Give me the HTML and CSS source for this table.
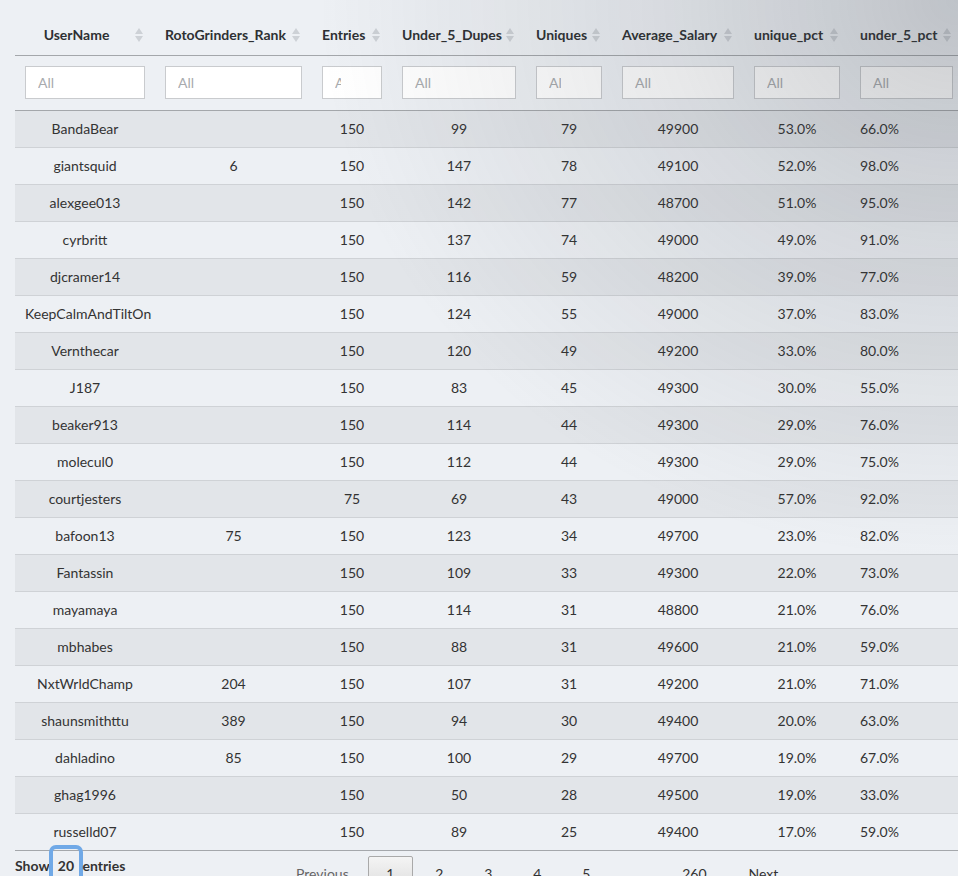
FILE: index.html
```html
<!DOCTYPE html>
<html lang="en">
<head>
<meta charset="utf-8">
<title>DFS Users</title>
<link rel="stylesheet" href="styles.css">
</head>
<body>
<div class="page">
  <table class="dt">
    <colgroup>
      <col class="c1"><col class="c2"><col class="c3"><col class="c4"><col class="c5"><col class="c6"><col class="c7"><col class="c8">
    </colgroup>
    <thead>
      <tr class="head">
        <th class="sortable">UserName</th>
        <th class="sortable">RotoGrinders_Rank</th>
        <th class="sortable">Entries</th>
        <th class="sortable">Under_5_Dupes</th>
        <th class="sortable">Uniques</th>
        <th class="sortable">Average_Salary</th>
        <th class="sortable">unique_pct</th>
        <th class="sortable left">under_5_pct</th>
      </tr>
      <tr class="filters">
        <td><input class="flt" placeholder="All"></td>
        <td><input class="flt" placeholder="All"></td>
        <td><input class="flt" placeholder="All"></td>
        <td><input class="flt" placeholder="All"></td>
        <td><input class="flt" placeholder="All"></td>
        <td><input class="flt" placeholder="All"></td>
        <td><input class="flt" placeholder="All"></td>
        <td><input class="flt" placeholder="All"></td>
      </tr>
    </thead>
    <tbody>
      <tr><td>BandaBear</td><td></td><td>150</td><td>99</td><td>79</td><td>49900</td><td>53.0%</td><td class="left">66.0%</td></tr>
      <tr><td>giantsquid</td><td>6</td><td>150</td><td>147</td><td>78</td><td>49100</td><td>52.0%</td><td class="left">98.0%</td></tr>
      <tr><td>alexgee013</td><td></td><td>150</td><td>142</td><td>77</td><td>48700</td><td>51.0%</td><td class="left">95.0%</td></tr>
      <tr><td>cyrbritt</td><td></td><td>150</td><td>137</td><td>74</td><td>49000</td><td>49.0%</td><td class="left">91.0%</td></tr>
      <tr><td>djcramer14</td><td></td><td>150</td><td>116</td><td>59</td><td>48200</td><td>39.0%</td><td class="left">77.0%</td></tr>
      <tr><td>KeepCalmAndTiltOn</td><td></td><td>150</td><td>124</td><td>55</td><td>49000</td><td>37.0%</td><td class="left">83.0%</td></tr>
      <tr><td>Vernthecar</td><td></td><td>150</td><td>120</td><td>49</td><td>49200</td><td>33.0%</td><td class="left">80.0%</td></tr>
      <tr><td>J187</td><td></td><td>150</td><td>83</td><td>45</td><td>49300</td><td>30.0%</td><td class="left">55.0%</td></tr>
      <tr><td>beaker913</td><td></td><td>150</td><td>114</td><td>44</td><td>49300</td><td>29.0%</td><td class="left">76.0%</td></tr>
      <tr><td>molecul0</td><td></td><td>150</td><td>112</td><td>44</td><td>49300</td><td>29.0%</td><td class="left">75.0%</td></tr>
      <tr><td>courtjesters</td><td></td><td>75</td><td>69</td><td>43</td><td>49000</td><td>57.0%</td><td class="left">92.0%</td></tr>
      <tr><td>bafoon13</td><td>75</td><td>150</td><td>123</td><td>34</td><td>49700</td><td>23.0%</td><td class="left">82.0%</td></tr>
      <tr><td>Fantassin</td><td></td><td>150</td><td>109</td><td>33</td><td>49300</td><td>22.0%</td><td class="left">73.0%</td></tr>
      <tr><td>mayamaya</td><td></td><td>150</td><td>114</td><td>31</td><td>48800</td><td>21.0%</td><td class="left">76.0%</td></tr>
      <tr><td>mbhabes</td><td></td><td>150</td><td>88</td><td>31</td><td>49600</td><td>21.0%</td><td class="left">59.0%</td></tr>
      <tr><td>NxtWrldChamp</td><td>204</td><td>150</td><td>107</td><td>31</td><td>49200</td><td>21.0%</td><td class="left">71.0%</td></tr>
      <tr><td>shaunsmithttu</td><td>389</td><td>150</td><td>94</td><td>30</td><td>49400</td><td>20.0%</td><td class="left">63.0%</td></tr>
      <tr><td>dahladino</td><td>85</td><td>150</td><td>100</td><td>29</td><td>49700</td><td>19.0%</td><td class="left">67.0%</td></tr>
      <tr><td>ghag1996</td><td></td><td>150</td><td>50</td><td>28</td><td>49500</td><td>19.0%</td><td class="left">33.0%</td></tr>
      <tr><td>russelld07</td><td></td><td>150</td><td>89</td><td>25</td><td>49400</td><td>17.0%</td><td class="left">59.0%</td></tr>
    </tbody>
  </table>
  <div class="footer">
    <div class="length">Show <span class="select">20</span> entries</div>
    <div class="paginate">
      <span class="pg disabled">Previous</span>
      <span class="pg current">1</span>
      <span class="pg">2</span>
      <span class="pg">3</span>
      <span class="pg">4</span>
      <span class="pg">5</span>
      <span class="ellipsis">…</span>
      <span class="pg">260</span>
      <span class="pg next">Next</span>
    </div>
  </div>
</div>
<div class="shade"></div>
</body>
</html>
```

FILE: styles.css
```css
html, body {
  margin: 0;
  padding: 0;
  height: 100%;
  overflow: hidden;
}
body {
  background: #edf0f4;
  font-family: "Lato", "Liberation Sans", sans-serif;
  font-size: 14px;
  color: #333;
}
.page {
  padding: 15px 0 0 15px;
  overflow: hidden;
}
.dt {
  border-collapse: collapse;
  table-layout: fixed;
  width: 948px;
}
.c1 { width: 140px; }
.c2 { width: 157px; }
.c3 { width: 80px; }
.c4 { width: 134px; }
.c5 { width: 86px; }
.c6 { width: 132px; }
.c7 { width: 106px; }
.c8 { width: 113px; }

.head th {
  position: relative;
  padding: 10px 27px 10px 10px;
  line-height: 20px;
  font-weight: 700;
  text-align: center;
  white-space: nowrap;
  border-bottom: 1px solid #a4a7ab;
  color: #2e3033;
}
.head th.left { text-align: left; }
.sortable::before,
.sortable::after {
  content: "";
  position: absolute;
  right: 12px;
  width: 0;
  height: 0;
  border-left: 4px solid transparent;
  border-right: 4px solid transparent;
}
.sortable::before {
  top: 13px;
  border-bottom: 6px solid #cdd1d6;
}
.sortable::after {
  top: 21px;
  border-top: 6px solid #cdd1d6;
}

.filters td {
  padding: 10px 10px 11px;
  border-bottom: 1px solid #a4a7ab;
}
.flt {
  display: block;
  box-sizing: border-box;
  width: 100%;
  height: 33px;
  margin: 0;
  padding: 0 40px 0 12px;
  border: 1px solid #c9cbce;
  background: #fff;
  font-family: inherit;
  font-size: 14px;
  color: #555;
  outline: none;
}
.flt::placeholder { color: #a8abae; }

tbody td {
  padding: 8px 10px;
  line-height: 20px;
  text-align: center;
  white-space: nowrap;
  border-top: 1px solid #cfd2d6;
}
tbody td.left { text-align: left; }
tbody tr:first-child td { border-top: none; }
tbody tr:last-child td { border-bottom: 1px solid #a4a7ab; }
tbody tr:nth-child(odd) td { background: rgba(0, 0, 0, 0.045); }

.footer {
  display: flex;
  align-items: flex-start;
  padding-top: 5px;
}
.length {
  flex: 0 0 266px;
  font-weight: 700;
  line-height: 20px;
  white-space: nowrap;
}
.select {
  display: inline-block;
  padding: 7px 5px 12px;
  margin: -7px 0 -12px;
  border-radius: 3px;
  box-shadow: 0 0 0 4px #70a9e7;
  line-height: 20px;
}
.paginate {
  display: flex;
  align-items: flex-start;
  gap: 4px;
  line-height: 20px;
}
.pg {
  box-sizing: border-box;
  min-width: 45px;
  padding: 7px 14px;
  border: 1px solid transparent;
  border-radius: 2px;
  text-align: center;
  color: #333;
}
.pg.disabled { color: #666; }
.pg.current {
  border-color: #a9a9a9;
  background: linear-gradient(to bottom, #f4f4f4 0%, #dcdcdc 100%);
}
.pg.next { margin-left: 8px; }
.ellipsis {
  padding: 8px 20px;
}
.shade {
  position: fixed;
  inset: 0;
  pointer-events: none;
  background: radial-gradient(ellipse 640px 560px at 100% 0%, rgba(60, 66, 76, 0.26) 0%, rgba(60, 66, 76, 0.12) 45%, rgba(60, 66, 76, 0) 100%);
}
```
